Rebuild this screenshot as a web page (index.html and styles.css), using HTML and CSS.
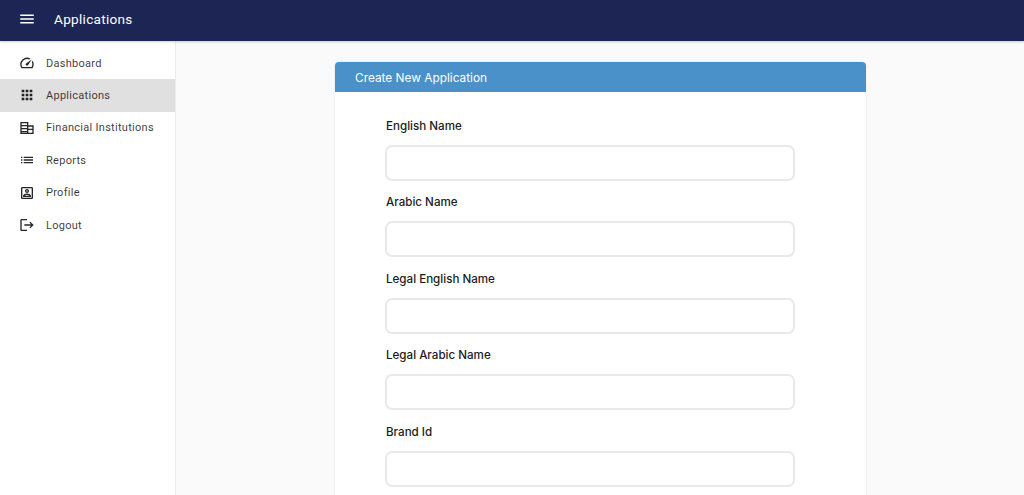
FILE: index.html
```html
<!DOCTYPE html>
<html lang="en">
<head>
<meta charset="utf-8">
<title>Applications</title>
<link rel="stylesheet" href="styles.css">
</head>
<body>
<header class="topbar">
  <svg class="menu-icon" viewBox="0 0 24 24"><path d="M3 18h18v-2H3v2zm0-5h18v-2H3v2zm0-7v2h18V6H3z"/></svg>
  <h1 class="topbar-title">Applications</h1>
</header>
<div class="shell">
  <nav class="sidebar">
    <a class="nav-item"><svg class="nav-icon" viewBox="0 0 24 24"><path d="M20.38 8.57l-1.23 1.85a8 8 0 0 1-.22 7.58H5.07A8 8 0 0 1 15.58 6.85l1.85-1.23A10 10 0 0 0 3.35 19a2 2 0 0 0 1.72 1h13.85a2 2 0 0 0 1.74-1 10 10 0 0 0-.27-10.44zM10.59 15.41a2 2 0 0 0 2.83 0l5.66-8.49-8.49 5.66a2 2 0 0 0 0 2.83z"/></svg><span>Dashboard</span></a>
    <a class="nav-item is-active"><svg class="nav-icon" viewBox="0 0 24 24"><path d="M4 8h4V4H4v4zm6 12h4v-4h-4v4zm-6 0h4v-4H4v4zm0-6h4v-4H4v4zm6 0h4v-4h-4v4zm6-10v4h4V4h-4zm-6 4h4V4h-4v4zm6 6h4v-4h-4v4zm0 6h4v-4h-4v4z"/></svg><span>Applications</span></a>
    <a class="nav-item"><svg class="nav-icon" viewBox="0 0 24 24"><path fill-rule="evenodd" d="M2 3h12v5h8v13H2zM4 5v2.5h8V5zm0 4.5V12h8V9.500zM4 14v2.500h8V14zm0 4.500V19h8v-.5zM14 10v3h6v-3zm0 5v4h6v-4z"/></svg><span>Financial Institutions</span></a>
    <a class="nav-item"><svg class="nav-icon" viewBox="0 0 24 24"><path d="M3 13h2v-2H3v2zm0 4h2v-2H3v2zm0-8h2V7H3v2zm4 4h14v-2H7v2zm0 4h14v-2H7v2zM7 7v2h14V7H7z"/></svg><span>Reports</span></a>
    <a class="nav-item"><svg class="nav-icon" viewBox="0 0 24 24"><path d="M19 5v14H5V5h14m0-2H5c-1.11 0-2 .9-2 2v14c0 1.1.89 2 2 2h14c1.1 0 2-.9 2-2V5c0-1.1-.9-2-2-2zm-7 9c-1.65 0-3-1.35-3-3s1.35-3 3-3 3 1.35 3 3-1.35 3-3 3zm0-4c-.55 0-1 .45-1 1s.45 1 1 1 1-.45 1-1-.45-1-1-1zm6 10H6v-1.53c0-2.5 3.97-3.58 6-3.58s6 1.08 6 3.58V18zm-9.69-2h7.38c-.69-.56-2.38-1.12-3.69-1.12s-3.01.56-3.69 1.12z"/></svg><span>Profile</span></a>
    <a class="nav-item"><svg class="nav-icon" viewBox="0 0 24 24"><path d="M17 7l-1.41 1.41L18.17 11H8v2h10.17l-2.58 2.58L17 17l5-5zM4 5h8V3H4c-1.1 0-2 .9-2 2v14c0 1.1.9 2 2 2h8v-2H4V5z"/></svg><span>Logout</span></a>
  </nav>
  <main class="content">
    <section class="card">
      <h2 class="card-header">Create New Application</h2>
      <form class="form">
        <div class="field"><label class="field-label">English Name</label><input class="field-input" type="text"></div>
        <div class="field"><label class="field-label">Arabic Name</label><input class="field-input" type="text"></div>
        <div class="field"><label class="field-label">Legal English Name</label><input class="field-input" type="text"></div>
        <div class="field"><label class="field-label">Legal Arabic Name</label><input class="field-input" type="text"></div>
        <div class="field"><label class="field-label">Brand Id</label><input class="field-input" type="text"></div>
      </form>
    </section>
  </main>
</div>
</body>
</html>
```
FILE: styles.css
```css
* { box-sizing: border-box; }
html, body { height: 100%; }
body {
  margin: 0;
  overflow: hidden;
  background: #fafafa;
  font-family: Roboto, "Liberation Sans", sans-serif;
  color: rgba(0, 0, 0, 0.87);
}
.topbar {
  height: 41px;
  display: flex;
  align-items: center;
  padding: 0 0 3px 18px;
  gap: 18px;
  background: #1c2554;
  color: #fff;
  box-shadow: 0 1px 2px rgba(0, 0, 0, 0.2);
  position: relative;
  z-index: 2;
}
.menu-icon { width: 18px; height: 18px; fill: #fff; flex: none; }
.topbar-title { margin: 0; font-size: 13.6px; font-weight: 400; letter-spacing: 0.28px; }
.shell { display: flex; height: 454px; overflow: hidden; }
.sidebar {
  width: 176px;
  flex: none;
  padding-top: 5.9px;
  background: #fff;
  border-right: 1px solid #ececec;
}
.nav-item {
  height: 32.4px;
  display: flex;
  align-items: center;
  padding-left: 19px;
  gap: 11px;
  font-size: 11px;
  letter-spacing: 0.28px;
  color: rgba(0, 0, 0, 0.78);
}
.nav-item.is-active { background: #e0e0e0; }
.nav-icon { width: 16px; height: 16px; fill: rgba(0, 0, 0, 0.85); flex: none; }
.content { flex: 1; min-width: 0; padding: 21px 158px 0 159px; }
.card {
  background: #fff;
  border-radius: 4px 4px 0 0;
  box-shadow: 0 0 2px rgba(0, 0, 0, 0.12);
  padding-bottom: 40px;
}
.card-header {
  margin: 0;
  height: 30px;
  padding: 1px 0 0 20px;
  display: flex;
  align-items: center;
  border-radius: 4px 4px 0 0;
  background: #4a90c9;
  color: #fff;
  font-family: Inter, Roboto, sans-serif;
  font-size: 11.85px;
  font-weight: 400;
}
.form { padding: 25px 71px 0 50px; display: flex; flex-direction: column; gap: 12.4px; }
.field { display: flex; flex-direction: column; gap: 10px; }
.field-label {
  padding-left: 1px;
  font-family: Inter, Roboto, sans-serif;
  font-size: 11.6px;
  font-weight: 500;
  line-height: 18px;
  color: #1c1c1c;
}
.field-input {
  height: 36px;
  width: 100%;
  border: 2px solid #e9e9e9;
  border-radius: 7px;
  background: #fff;
  outline: none;
}
```
